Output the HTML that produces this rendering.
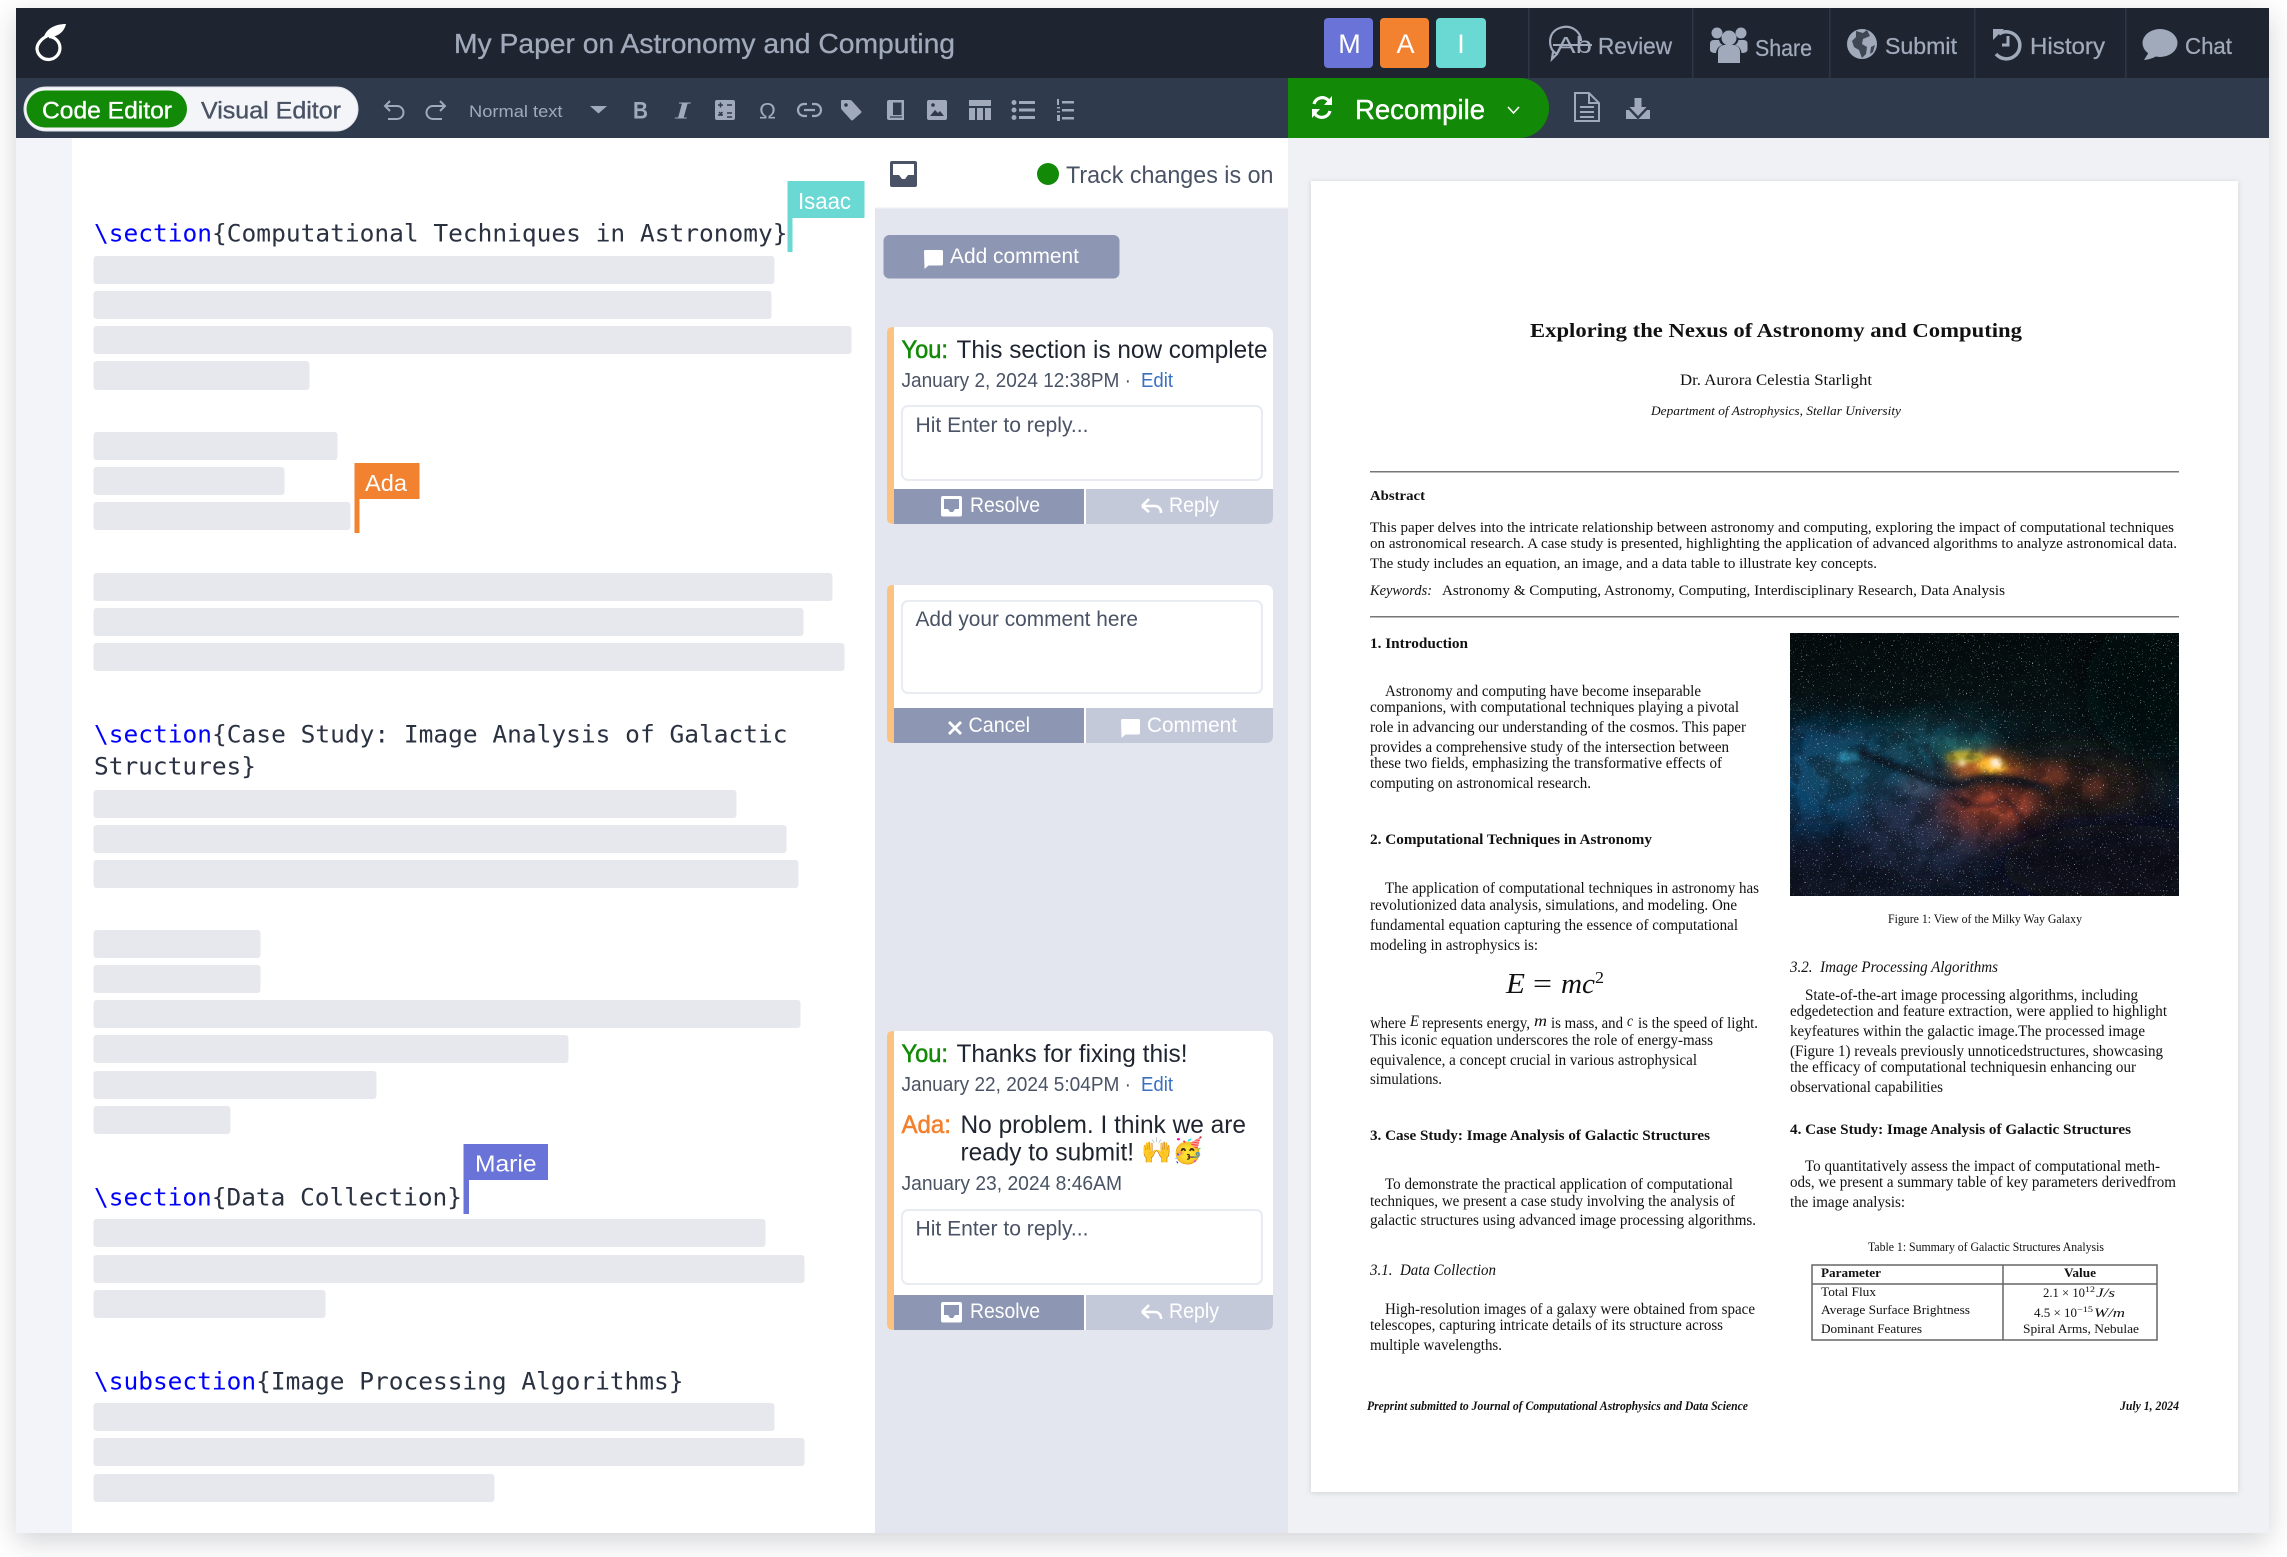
<!DOCTYPE html>
<html lang="en"><head><meta charset="utf-8"><title>My Paper on Astronomy and Computing</title>
<style>
html,body{margin:0;padding:0;background:#fff;width:2287px;height:1557px;overflow:hidden}
#app{position:absolute;left:16px;top:8px;width:2253px;height:1525px;box-shadow:0 8px 26px rgba(30,37,48,.2);background:#fff}
svg{position:absolute;left:0;top:0}
.u{font-family:"Liberation Sans",sans-serif}
.s{font-family:"Liberation Serif",serif;fill:#111}
.b{font-weight:bold}.i{font-style:italic}
.m{font-family:"DejaVu Sans Mono","Liberation Mono",monospace;font-size:24.4px;fill:#2a3140}
.m tspan{fill:#0000ff}
.bar{fill:#e7e8ed}
.h{font-size:23px;fill:#a0aabb}
.t{font-size:15.4px}.a{font-size:14.5px}.sec{font-size:14.2px;font-weight:bold}.tb{font-size:12.6px}
.cap{font-size:12.4px}
.d{font-size:20px;fill:#495365}.e{font-size:20px;fill:#3a6fc2}.c{font-size:25px;fill:#1e2530}.y{font-size:25px;fill:#138a07;stroke:#138a07;stroke-width:.55}
.p{font-size:21.5px;fill:#495365}.w{font-size:21px;fill:#fff}
</style></head><body>
<div id="app"></div>
<svg width="2287" height="1557" viewBox="0 0 2287 1557" xmlns="http://www.w3.org/2000/svg">
<defs>
<clipPath id="gc"><rect x="1790" y="633" width="389" height="263"/></clipPath>
<filter id="f0" x="-60%" y="-60%" width="220%" height="220%"><feGaussianBlur stdDeviation="26"/></filter>
<filter id="f1" x="-50%" y="-50%" width="200%" height="200%"><feGaussianBlur stdDeviation="16"/></filter>
<filter id="f2" x="-50%" y="-50%" width="200%" height="200%"><feGaussianBlur stdDeviation="7"/></filter>
<filter id="f3" x="-50%" y="-50%" width="200%" height="200%"><feGaussianBlur stdDeviation="2.5"/></filter>
<filter id="stars" x="0" y="0" width="1" height="1" color-interpolation-filters="sRGB"><feTurbulence type="fractalNoise" baseFrequency="0.62" numOctaves="2" seed="7"/><feColorMatrix values="0 0 0 0 .85  0 0 0 0 .9  0 0 0 0 1  16 0 0 0 -11.200"/></filter>
<filter id="noise" x="0" y="0" width="1" height="1" color-interpolation-filters="sRGB"><feTurbulence type="fractalNoise" baseFrequency="0.045" numOctaves="4" seed="11"/><feColorMatrix values="0 0 0 0 .02  0 0 0 0 .03  0 0 0 0 .05  6 0 0 0 -2.600"/></filter>
<linearGradient id="gbg" x1="0" y1="0" x2="0" y2="1"><stop offset="0" stop-color="#040b0b"/><stop offset=".3" stop-color="#071416"/><stop offset=".5" stop-color="#0a1c22"/><stop offset=".75" stop-color="#10172a"/><stop offset="1" stop-color="#111624"/></linearGradient>
<g id="inb"><rect x="0" y="0" width="21" height="20.5" rx="2" fill="#fff"/><path d="M3 3h15v10h-4l-2 3h-3l-2-3H3z" fill="#8d96b2"/></g>
<g id="rep"><path d="M1 9h13a6 6 0 0 1 6 6v1M1 9l7-7M1 9l7 6" fill="none" stroke="#fff" stroke-width="2.6"/></g>
<g id="bub"><path d="M0 1.500q0-1.500 1.500-1.500h16q1.500 0 1.500 1.500v12.500q0 1.500-1.500 1.500h-13l-4 3.500z" fill="#fff"/></g>
</defs>

<!-- header -->
<rect x="16" y="8" width="2253" height="70" fill="#1e2530"/>
<rect x="16" y="78" width="2253" height="60" fill="#2f3a4d"/>
<path d="M44 37C46 29 55 24 66 24C64 33 56 38 46 37Z" fill="#fff"/>
<path d="M47 36C41 39 37 44 37 49A11.500 11.500 0 1 0 49 36.500" fill="none" stroke="#fff" stroke-width="3.200"/>
<text class="u" x="454" y="53" font-size="28" fill="#a0aabb" stroke="#a0aabb" stroke-width=".3" textLength="501" lengthAdjust="spacingAndGlyphs">My Paper on Astronomy and Computing</text>

<rect x="1324" y="18" width="49" height="50" rx="4" fill="#6a74d8"/><text class="u" x="1349.500" y="53" font-size="27" fill="#fff" text-anchor="middle">M</text>
<rect x="1380" y="18" width="49" height="50" rx="4" fill="#f28130"/><text class="u" x="1405.500" y="53" font-size="27" fill="#fff" text-anchor="middle">A</text>
<rect x="1436" y="18" width="50" height="50" rx="4" fill="#6ad8d3"/><text class="u" x="1461" y="53" font-size="27" fill="#fff" text-anchor="middle">I</text>
<g fill="#2c3645"><rect x="1528" y="8" width="1.500" height="70"/><rect x="1692" y="8" width="1.500" height="70"/><rect x="1829" y="8" width="1.500" height="70"/><rect x="1974" y="8" width="1.500" height="70"/><rect x="2125" y="8" width="1.500" height="70"/></g>

<path d="M1558 54C1550 52 1549 42 1551 36C1554 28 1566 24 1574 29C1579 32 1581 37 1581 41M1558 53L1552 59L1553 52" fill="none" stroke="#a0aabb" stroke-width="2.200"/>
<text class="u" x="1556" y="53" font-size="23" fill="#a0aabb" textLength="36" lengthAdjust="spacingAndGlyphs">Ab</text>
<rect x="1553" y="44" width="39" height="2" fill="#a0aabb"/>
<text class="u h" x="1598" y="54" stroke="#a0aabb" stroke-width=".25" textLength="74" lengthAdjust="spacingAndGlyphs">Review</text>

<g fill="#a0aabb"><circle cx="1729" cy="38" r="7.500"/><circle cx="1717" cy="33" r="5.500"/><circle cx="1741" cy="33" r="5.500"/><path d="M1718 63V52q0-6 6-7h10q6 1 6 7v11z"/><path d="M1710 50v-6q0-4 4-4h5q1 4 4 5q-6 1-7 8h-2q-4-1-4-3z"/><path d="M1747.500 50v-6q0-4-4-4h-5q-1 4-4 5q6 1 7 8h2q4-1 4-3z"/></g>
<text class="u h" x="1755" y="56" stroke="#a0aabb" stroke-width=".25" textLength="57" lengthAdjust="spacingAndGlyphs">Share</text>

<circle cx="1862" cy="44" r="15" fill="#a0aabb"/>
<path d="M1856 31l7 2 4-3 3 6-7 3-1 5 5 3-1 7-4 4-3-8-5-3-2-6 4-4zM1871 47l4-2-2 7-3 2z" fill="#1e2530" opacity=".75"/>
<text class="u h" x="1885" y="54" stroke="#a0aabb" stroke-width=".25" textLength="72" lengthAdjust="spacingAndGlyphs">Submit</text>

<path d="M1999 34a13.500 13.500 0 1 1-3 20" fill="none" stroke="#a0aabb" stroke-width="3.500"/><path d="M1993 29h11l-11 11z" fill="#a0aabb"/><path d="M2008 36v9h-6" fill="none" stroke="#a0aabb" stroke-width="3"/>
<text class="u h" x="2030" y="54" stroke="#a0aabb" stroke-width=".25" textLength="75" lengthAdjust="spacingAndGlyphs">History</text>

<ellipse cx="2160" cy="43" rx="17.500" ry="14" fill="#a0aabb"/><path d="M2149 52L2144 60Q2154 59 2159 54z" fill="#a0aabb"/>
<text class="u h" x="2185" y="54" stroke="#a0aabb" stroke-width=".25" textLength="47" lengthAdjust="spacingAndGlyphs">Chat</text>

<!-- toolbar -->
<rect x="24" y="87" width="334" height="44" rx="22" fill="#f4f5f8" stroke="#dfe2ea" stroke-width="1"/>
<rect x="26.500" y="90.500" width="160.500" height="37" rx="18.500" fill="#138a07"/>
<text class="u" x="42" y="118.500" font-size="24" fill="#fff" stroke="#fff" stroke-width=".35" textLength="130" lengthAdjust="spacingAndGlyphs">Code Editor</text>
<text class="u" x="201" y="118.500" font-size="24" fill="#495365" stroke="#495365" stroke-width=".35" textLength="140" lengthAdjust="spacingAndGlyphs">Visual Editor</text>
<g fill="none" stroke="#a0aabb" stroke-width="2">
<path d="M390 101l-5 5 5 5M385 106h12a6.500 6.500 0 0 1 0 13h-9"/>
<path d="M440 101l5 5-5 5M445 106h-12a6.500 6.500 0 0 0 0 13h9"/>
</g>
<text class="u" x="469" y="117" font-size="17" fill="#a0aabb" textLength="93.500" lengthAdjust="spacingAndGlyphs">Normal text</text>
<path d="M590 106h17l-8.500 7.500z" fill="#a0aabb"/>
<text class="u b" x="633" y="118.500" font-size="24" fill="#a0aabb" textLength="15" lengthAdjust="spacingAndGlyphs">B</text>
<text x="675" y="118.500" font-family="Liberation Serif,serif" font-style="italic" font-weight="bold" font-size="24" fill="#a0aabb" textLength="15" lengthAdjust="spacingAndGlyphs">I</text>
<rect x="715" y="100" width="20" height="20" rx="2" fill="#a0aabb"/><path d="M718 105h5M720.500 102.500v5M727 105h5M718 115h5M727 113h5M727 117h5M719 112l3.500 3.500M722.500 112l-3.500 3.500" stroke="#2f3a4d" stroke-width="1.500" fill="none"/>
<text class="u" x="759" y="118.500" font-size="22" fill="#a0aabb" textLength="17" lengthAdjust="spacingAndGlyphs">Ω</text>
<g fill="none" stroke="#a0aabb" stroke-width="2.200"><path d="M807 104h-3a6 6 0 0 0 0 12h3M812 104h3a6 6 0 0 1 0 12h-3M804 110h11"/></g>
<path d="M841 101q0-1 1-1h8q1 0 2 1l9 10q1 1 0 2l-8 7q-1 1-2 0l-9-10q-1-1-1-2z" fill="#a0aabb"/><circle cx="846" cy="105" r="1.800" fill="#2f3a4d"/>
<path d="M887 102q0-2 2-2h15v20h-15q-2 0-2-2z" fill="#a0aabb"/><path d="M893 102.500h8.500v12.500h-8.500z" fill="#2f3a4d"/><path d="M890 117h12" stroke="#2f3a4d" stroke-width="1.200"/>
<rect x="927" y="100" width="20" height="20" rx="2" fill="#a0aabb"/><path d="M930 116l5-6 3 3 2-2 4 5z" fill="#2f3a4d"/><circle cx="933" cy="105" r="1.800" fill="#2f3a4d"/>
<path d="M969 100h22v6h-22zM969 108h6v12h-6zM977 108h6v12h-6zM985 108h6v12h-6z" fill="#a0aabb"/>
<g fill="#a0aabb"><circle cx="1014" cy="102.500" r="2.500"/><circle cx="1014" cy="110" r="2.500"/><circle cx="1014" cy="117.500" r="2.500"/><rect x="1019" y="101" width="16" height="3"/><rect x="1019" y="108.500" width="16" height="3"/><rect x="1019" y="116" width="16" height="3"/>
<rect x="1057" y="99" width="2" height="6"/><rect x="1057" y="107" width="3" height="1.500"/><rect x="1057" y="111" width="3" height="1.500"/><rect x="1057" y="115" width="3" height="6"/><rect x="1062" y="101" width="12" height="2.500"/><rect x="1062" y="109" width="12" height="2.500"/><rect x="1062" y="117" width="12" height="2.500"/></g>

<path d="M1288 78H1519A30 30 0 0 1 1549 108A30 30 0 0 1 1519 138H1288z" fill="#138a07"/>
<g fill="none" stroke="#fff" stroke-width="3.200"><path d="M1314 104a8.500 8.500 0 0 1 15-3"/><path d="M1330 111a8.500 8.500 0 0 1-15 3"/></g><path d="M1332 96v9h-8zM1312 118v-9h8z" fill="#fff"/>
<text class="u" x="1355" y="119" font-size="28" fill="#fff" stroke="#fff" stroke-width=".4" textLength="130" lengthAdjust="spacingAndGlyphs">Recompile</text>
<path d="M1508 107l5.500 6 5.500-6" fill="none" stroke="#fff" stroke-width="1.600"/>
<path d="M1575 93h14l10 10v18h-24zM1589 93v10h10" fill="none" stroke="#a0aabb" stroke-width="2"/><path d="M1580 107h14M1580 112h14M1580 117h14" stroke="#a0aabb" stroke-width="2"/>
<path d="M1634.500 98h7v9h5l-8.500 9-8.500-9h5z" fill="#a0aabb"/><path d="M1626 110h3l9 9.500 9-9.500h3v9h-24z" fill="#a0aabb"/>

<!-- editor -->
<rect x="16" y="138" width="859" height="1395" fill="#fff"/>
<rect x="16" y="138" width="56" height="1395" fill="#f3f4f9"/>
<g class="bar" transform="translate(-.5 0)">
<rect x="94" y="256" width="681" height="28" rx="3"/><rect x="94" y="291" width="678" height="28" rx="3"/><rect x="94" y="326" width="758" height="28" rx="3"/><rect x="94" y="361" width="216" height="29" rx="3"/>
<rect x="94" y="432" width="244" height="28" rx="3"/><rect x="94" y="467" width="191" height="28" rx="3"/><rect x="94" y="502" width="257" height="28" rx="3"/>
<rect x="94" y="573" width="739" height="28" rx="3"/><rect x="94" y="608" width="710" height="28" rx="3"/><rect x="94" y="643" width="751" height="28" rx="3"/>
<rect x="94" y="790" width="643" height="28" rx="3"/><rect x="94" y="825" width="693" height="28" rx="3"/><rect x="94" y="860" width="705" height="28" rx="3"/>
<rect x="94" y="930" width="167" height="28" rx="3"/><rect x="94" y="965" width="167" height="28" rx="3"/><rect x="94" y="1000" width="707" height="28" rx="3"/><rect x="94" y="1035" width="475" height="28" rx="3"/><rect x="94" y="1071" width="283" height="28" rx="3"/><rect x="94" y="1106" width="137" height="28" rx="3"/>
<rect x="94" y="1219" width="672" height="28" rx="3"/><rect x="94" y="1255" width="711" height="28" rx="3"/><rect x="94" y="1290" width="232" height="28" rx="3"/>
<rect x="94" y="1403" width="681" height="28" rx="3"/><rect x="94" y="1438" width="711" height="28" rx="3"/><rect x="94" y="1474" width="401" height="28" rx="3"/>
</g>
<text class="m" x="94" y="241.500" textLength="693.500" lengthAdjust="spacingAndGlyphs"><tspan>\section</tspan>{Computational Techniques in Astronomy}</text>
<text class="m" x="94" y="742.500" textLength="693.500" lengthAdjust="spacingAndGlyphs"><tspan>\section</tspan>{Case Study: Image Analysis of Galactic</text>
<text class="m" x="94" y="774.500" textLength="162" lengthAdjust="spacingAndGlyphs">Structures}</text>
<text class="m" x="94" y="1205.500" textLength="368" lengthAdjust="spacingAndGlyphs"><tspan>\section</tspan>{Data Collection}</text>
<text class="m" x="94" y="1389.500" textLength="589.500" lengthAdjust="spacingAndGlyphs"><tspan>\subsection</tspan>{Image Processing Algorithms}</text>

<path d="M787.500 181h77v37h-72v34h-5z" fill="#6ad8d3"/><text class="u" x="798" y="209" font-size="23" fill="#fff" textLength="53" lengthAdjust="spacingAndGlyphs">Isaac</text>
<path d="M354.500 463h65v36h-60v34h-5z" fill="#f28130"/><text class="u" x="365" y="491" font-size="23" fill="#fff" textLength="42" lengthAdjust="spacingAndGlyphs">Ada</text>
<path d="M463.500 1144h84.500v36h-79v34h-5.500z" fill="#6a74d8"/><text class="u" x="475" y="1171.500" font-size="23" fill="#fff" textLength="61.500" lengthAdjust="spacingAndGlyphs">Marie</text>

<!-- review panel -->
<rect x="875" y="138" width="413" height="1395" fill="#e3e6ef"/>
<rect x="875" y="138" width="413" height="70" fill="#fff"/>
<rect x="875" y="207.500" width="413" height="1.500" fill="#eceef3"/>
<path d="M892 161h23q2 0 2 2v22q0 2-2 2h-23q-2 0-2-2v-22q0-2 2-2z" fill="#495365"/><path d="M893 164h21v11h-6l-3 4h-3l-3-4h-6z" fill="#fff"/>
<circle cx="1048" cy="174" r="11" fill="#138a07"/>
<text class="u" x="1066" y="183" font-size="24.500" fill="#495365" textLength="207.500" lengthAdjust="spacingAndGlyphs">Track changes is on</text>

<rect x="883.500" y="235" width="236" height="43.500" rx="6" fill="#8d96b2"/>
<use href="#bub" x="924" y="250"/>
<text class="u w" x="950" y="263" textLength="129" lengthAdjust="spacingAndGlyphs">Add comment</text>

<!-- card 1 -->
<rect x="887" y="327" width="386" height="197" rx="7" fill="#fff"/><path d="M894 327h-1q-6 0-6 6v185q0 6 6 6h1z" fill="#fcc27f"/>
<text class="u y" x="901.500" y="358" textLength="46.500" lengthAdjust="spacingAndGlyphs">You:</text>
<text class="u c" x="956.500" y="358" textLength="311" lengthAdjust="spacingAndGlyphs">This section is now complete</text>
<text class="u d" x="901.500" y="387" textLength="229.500" lengthAdjust="spacingAndGlyphs">January 2, 2024 12:38PM ·</text>
<text class="u e" x="1141" y="387" textLength="32" lengthAdjust="spacingAndGlyphs">Edit</text>
<rect x="902" y="406" width="360" height="74" rx="6" fill="#fff" stroke="#e8ebf2" stroke-width="2"/>
<text class="u p" x="915.500" y="432" textLength="173" lengthAdjust="spacingAndGlyphs">Hit Enter to reply...</text>
<rect x="894" y="489" width="190" height="35" fill="#8d96b2"/><path d="M1086 489h187v28q0 7-7 7h-180z" fill="#c4c9da"/>
<use href="#inb" x="941" y="496"/><text class="u w" x="970" y="512" textLength="70" lengthAdjust="spacingAndGlyphs">Resolve</text>
<use href="#rep" x="1141" y="497"/><text class="u w" x="1169" y="512" textLength="50" lengthAdjust="spacingAndGlyphs">Reply</text>

<!-- card 2 -->
<rect x="887" y="585" width="386" height="158" rx="7" fill="#fff"/><path d="M894 585h-1q-6 0-6 6v146q0 6 6 6h1z" fill="#fcc27f"/>
<rect x="902" y="601" width="360" height="92" rx="6" fill="#fff" stroke="#e8ebf2" stroke-width="2"/>
<text class="u p" x="915.500" y="626" textLength="222.500" lengthAdjust="spacingAndGlyphs">Add your comment here</text>
<rect x="894" y="708" width="190" height="35" fill="#8d96b2"/><path d="M1086 708h187v28q0 7-7 7h-180z" fill="#c4c9da"/>
<path d="M949 722l12 12M961 722l-12 12" stroke="#fff" stroke-width="2.800"/><text class="u w" x="968.500" y="732" textLength="61.500" lengthAdjust="spacingAndGlyphs">Cancel</text>
<use href="#bub" x="1121" y="719"/><text class="u w" x="1147" y="732" textLength="90" lengthAdjust="spacingAndGlyphs">Comment</text>

<!-- card 3 -->
<rect x="887" y="1031" width="386" height="299" rx="7" fill="#fff"/><path d="M894 1031h-1q-6 0-6 6v287q0 6 6 6h1z" fill="#fcc27f"/>
<text class="u y" x="901.500" y="1062" textLength="46.500" lengthAdjust="spacingAndGlyphs">You:</text>
<text class="u c" x="956.500" y="1062" textLength="231" lengthAdjust="spacingAndGlyphs">Thanks for fixing this!</text>
<text class="u d" x="901.500" y="1091" textLength="229.500" lengthAdjust="spacingAndGlyphs">January 22, 2024 5:04PM ·</text>
<text class="u e" x="1141" y="1091" textLength="32" lengthAdjust="spacingAndGlyphs">Edit</text>
<text class="u" x="901.500" y="1133" font-size="25" fill="#f2812f" stroke="#f2812f" stroke-width=".55" textLength="49.500" lengthAdjust="spacingAndGlyphs">Ada:</text>
<text class="u c" x="960.500" y="1133" textLength="285.500" lengthAdjust="spacingAndGlyphs">No problem. I think we are</text>
<text class="u c" x="960.500" y="1160.500" textLength="173.500" lengthAdjust="spacingAndGlyphs">ready to submit!</text>
<text x="1141" y="1159" font-size="25" font-family="'Noto Color Emoji','Liberation Sans',sans-serif">🙌</text>
<text x="1172" y="1159" font-size="25" font-family="'Noto Color Emoji','Liberation Sans',sans-serif">🥳</text>
<text class="u d" x="901.500" y="1190" textLength="220.500" lengthAdjust="spacingAndGlyphs">January 23, 2024 8:46AM</text>
<rect x="902" y="1210" width="360" height="74" rx="6" fill="#fff" stroke="#e8ebf2" stroke-width="2"/>
<text class="u p" x="915.500" y="1235.500" textLength="173" lengthAdjust="spacingAndGlyphs">Hit Enter to reply...</text>
<rect x="894" y="1295" width="190" height="35" fill="#8d96b2"/><path d="M1086 1295h187v28q0 7-7 7h-180z" fill="#c4c9da"/>
<use href="#inb" x="941" y="1302"/><text class="u w" x="970" y="1318" textLength="70" lengthAdjust="spacingAndGlyphs">Resolve</text>
<use href="#rep" x="1141" y="1303"/><text class="u w" x="1169" y="1318" textLength="50" lengthAdjust="spacingAndGlyphs">Reply</text>

<!-- pdf pane -->
<rect x="1288" y="138" width="981" height="1395" fill="#eff1f4"/>
<rect x="1311" y="181" width="927" height="1311" fill="#fff" style="filter:drop-shadow(0 1px 3px rgba(30,37,48,.15))"/>

<text class="s b" x="1530" y="337" font-size="20.500" textLength="492" lengthAdjust="spacingAndGlyphs">Exploring the Nexus of Astronomy and Computing</text>
<text class="s" x="1680" y="385" font-size="15.500" textLength="192" lengthAdjust="spacingAndGlyphs">Dr. Aurora Celestia Starlight</text>
<text class="s i" x="1651" y="415" font-size="12.800" textLength="250" lengthAdjust="spacingAndGlyphs">Department of Astrophysics, Stellar University</text>
<rect x="1370" y="471" width="809" height="1.500" fill="#777"/>
<text class="s b" x="1370" y="500" font-size="13.500" textLength="55" lengthAdjust="spacingAndGlyphs">Abstract</text>
<text class="s a" x="1370" y="532" textLength="804" lengthAdjust="spacingAndGlyphs">This paper delves into the intricate relationship between astronomy and computing, exploring the impact of computational techniques</text>
<text class="s a" x="1370" y="548" textLength="807" lengthAdjust="spacingAndGlyphs">on astronomical research. A case study is presented, highlighting the application of advanced algorithms to analyze astronomical data.</text>
<text class="s a" x="1370" y="568" textLength="507" lengthAdjust="spacingAndGlyphs">The study includes an equation, an image, and a data table to illustrate key concepts.</text>
<text class="s a i" x="1370" y="595" textLength="62" lengthAdjust="spacingAndGlyphs">Keywords:</text>
<text class="s a" x="1442" y="595" textLength="563" lengthAdjust="spacingAndGlyphs">Astronomy &amp; Computing, Astronomy, Computing, Interdisciplinary Research, Data Analysis</text>
<rect x="1370" y="616" width="809" height="1.500" fill="#777"/>

<text class="s sec" x="1370" y="648" textLength="98" lengthAdjust="spacingAndGlyphs">1. Introduction</text>
<text class="s t" x="1385" y="696" textLength="316" lengthAdjust="spacingAndGlyphs">Astronomy and computing have become inseparable</text>
<text class="s t" x="1370" y="712" textLength="369" lengthAdjust="spacingAndGlyphs">companions, with computational techniques playing a pivotal</text>
<text class="s t" x="1370" y="732" textLength="376" lengthAdjust="spacingAndGlyphs">role in advancing our understanding of the cosmos. This paper</text>
<text class="s t" x="1370" y="752" textLength="359" lengthAdjust="spacingAndGlyphs">provides a comprehensive study of the intersection between</text>
<text class="s t" x="1370" y="768" textLength="352" lengthAdjust="spacingAndGlyphs">these two fields, emphasizing the transformative effects of</text>
<text class="s t" x="1370" y="788" textLength="221" lengthAdjust="spacingAndGlyphs">computing on astronomical research.</text>
<text class="s sec" x="1370" y="844" textLength="282" lengthAdjust="spacingAndGlyphs">2. Computational Techniques in Astronomy</text>
<text class="s t" x="1385" y="893" textLength="374" lengthAdjust="spacingAndGlyphs">The application of computational techniques in astronomy has</text>
<text class="s t" x="1370" y="910" textLength="367" lengthAdjust="spacingAndGlyphs">revolutionized data analysis, simulations, and modeling. One</text>
<text class="s t" x="1370" y="930" textLength="368" lengthAdjust="spacingAndGlyphs">fundamental equation capturing the essence of computational</text>
<text class="s t" x="1370" y="950" textLength="168" lengthAdjust="spacingAndGlyphs">modeling in astrophysics is:</text>
<text class="s i" x="1506" y="993" font-size="28" textLength="19" lengthAdjust="spacingAndGlyphs">E</text>
<text class="s" x="1533" y="993" font-size="28" textLength="19" lengthAdjust="spacingAndGlyphs">=</text>
<text class="s i" x="1561" y="993" font-size="28" textLength="34" lengthAdjust="spacingAndGlyphs">mc</text>
<text class="s" x="1595" y="983" font-size="17" textLength="9" lengthAdjust="spacingAndGlyphs">2</text>
<text class="s t" x="1370" y="1028" textLength="36" lengthAdjust="spacingAndGlyphs">where</text>
<text class="s t i" x="1410" y="1026" textLength="9" lengthAdjust="spacingAndGlyphs">E</text>
<text class="s t" x="1422" y="1028" textLength="108" lengthAdjust="spacingAndGlyphs">represents energy,</text>
<text class="s t i" x="1534" y="1026" textLength="13" lengthAdjust="spacingAndGlyphs">m</text>
<text class="s t" x="1551" y="1028" textLength="72" lengthAdjust="spacingAndGlyphs">is mass, and</text>
<text class="s t i" x="1627" y="1026" textLength="6" lengthAdjust="spacingAndGlyphs">c</text>
<text class="s t" x="1638" y="1028" textLength="120" lengthAdjust="spacingAndGlyphs">is the speed of light.</text>
<text class="s t" x="1370" y="1045" textLength="343" lengthAdjust="spacingAndGlyphs">This iconic equation underscores the role of energy-mass</text>
<text class="s t" x="1370" y="1065" textLength="327" lengthAdjust="spacingAndGlyphs">equivalence, a concept crucial in various astrophysical</text>
<text class="s t" x="1370" y="1084" textLength="72" lengthAdjust="spacingAndGlyphs">simulations.</text>
<text class="s sec" x="1370" y="1140" textLength="340" lengthAdjust="spacingAndGlyphs">3. Case Study: Image Analysis of Galactic Structures</text>
<text class="s t" x="1385" y="1189" textLength="348" lengthAdjust="spacingAndGlyphs">To demonstrate the practical application of computational</text>
<text class="s t" x="1370" y="1206" textLength="365" lengthAdjust="spacingAndGlyphs">techniques, we present a case study involving the analysis of</text>
<text class="s t" x="1370" y="1225" textLength="386" lengthAdjust="spacingAndGlyphs">galactic structures using advanced image processing algorithms.</text>
<text class="s t i" x="1370" y="1275" xml:space="preserve" textLength="126" lengthAdjust="spacingAndGlyphs">3.1.  Data Collection</text>
<text class="s t" x="1385" y="1314" textLength="370" lengthAdjust="spacingAndGlyphs">High-resolution images of a galaxy were obtained from space</text>
<text class="s t" x="1370" y="1330" textLength="353" lengthAdjust="spacingAndGlyphs">telescopes, capturing intricate details of its structure across</text>
<text class="s t" x="1370" y="1350" textLength="132" lengthAdjust="spacingAndGlyphs">multiple wavelengths.</text>
<text class="s b i" x="1367" y="1410" font-size="12.500" textLength="381" lengthAdjust="spacingAndGlyphs">Preprint submitted to Journal of Computational Astrophysics and Data Science</text>
<text class="s b i" x="2120" y="1410" font-size="12.500" textLength="59" lengthAdjust="spacingAndGlyphs">July 1, 2024</text>

<!-- galaxy -->
<g clip-path="url(#gc)">
<rect x="1790" y="633" width="389" height="263" fill="url(#gbg)"/>
<ellipse cx="1815" cy="775" rx="85" ry="50" fill="#0d4470" filter="url(#f1)"/>
<ellipse cx="1885" cy="770" rx="90" ry="34" fill="#134862" filter="url(#f1)"/>
<ellipse cx="1930" cy="825" rx="70" ry="42" fill="#232f48" filter="url(#f1)"/>
<ellipse cx="1945" cy="745" rx="55" ry="22" fill="#164a58" filter="url(#f1)"/>
<ellipse cx="1960" cy="750" rx="28" ry="9" fill="#2a8a86" filter="url(#f2)"/>
<ellipse cx="2070" cy="785" rx="85" ry="30" fill="#2c1a18" filter="url(#f1)"/>
<ellipse cx="1990" cy="808" rx="52" ry="26" fill="#7a3326" filter="url(#f1)"/>
<ellipse cx="2000" cy="805" rx="32" ry="14" fill="#a5452e" filter="url(#f2)"/>
<ellipse cx="2048" cy="775" rx="26" ry="9" fill="#7c3826" filter="url(#f2)"/>
<ellipse cx="2095" cy="787" rx="14" ry="7" fill="#6e3226" filter="url(#f2)"/>
<ellipse cx="1985" cy="766" rx="38" ry="14" fill="#b45a22" filter="url(#f2)"/>
<ellipse cx="1965" cy="757" rx="20" ry="6" fill="#b8a830" filter="url(#f3)"/>
<ellipse cx="1992" cy="766" rx="15" ry="9" fill="#ffb92e" filter="url(#f3)"/>
<ellipse cx="1996" cy="763" rx="6" ry="5" fill="#fff0d8" filter="url(#f3)"/>
<ellipse cx="1962" cy="763" rx="4" ry="3" fill="#fff0c0" filter="url(#f3)"/>
<ellipse cx="1850" cy="757" rx="11" ry="5" fill="#2f9cc4" filter="url(#f3)"/>
<ellipse cx="1918" cy="785" rx="16" ry="10" fill="#45566e" filter="url(#f2)"/>
<path d="M1860 752Q1900 768 1925 778Q1950 790 1975 780Q2010 776 2050 790" fill="none" stroke="#0a1220" stroke-width="8" filter="url(#f3)" opacity=".85"/>
<path d="M1950 795Q1985 815 2005 798Q2020 815 2035 835M1940 770L1925 745" fill="none" stroke="#14101a" stroke-width="4" filter="url(#f3)" opacity=".7"/>
<ellipse cx="2155" cy="690" rx="70" ry="70" fill="#030808" filter="url(#f1)" opacity=".8"/>
<ellipse cx="2120" cy="865" rx="120" ry="40" fill="#0e1016" filter="url(#f1)" opacity=".8"/>
<rect x="1790" y="633" width="389" height="263" filter="url(#noise)" opacity=".3"/>
<rect x="1790" y="633" width="389" height="263" filter="url(#stars)" opacity=".6"/>
</g>
<text class="s cap" x="1888" y="923" textLength="194" lengthAdjust="spacingAndGlyphs">Figure 1: View of the Milky Way Galaxy</text>

<text class="s t i" x="1790" y="972" xml:space="preserve" textLength="208" lengthAdjust="spacingAndGlyphs">3.2.  Image Processing Algorithms</text>
<text class="s t" x="1805" y="1000" textLength="333" lengthAdjust="spacingAndGlyphs">State-of-the-art image processing algorithms, including</text>
<text class="s t" x="1790" y="1016" textLength="377" lengthAdjust="spacingAndGlyphs">edgedetection and feature extraction, were applied to highlight</text>
<text class="s t" x="1790" y="1036" textLength="355" lengthAdjust="spacingAndGlyphs">keyfeatures within the galactic image.The processed image</text>
<text class="s t" x="1790" y="1056" textLength="373" lengthAdjust="spacingAndGlyphs">(Figure 1) reveals previously unnoticedstructures, showcasing</text>
<text class="s t" x="1790" y="1072" textLength="346" lengthAdjust="spacingAndGlyphs">the efficacy of computational techniquesin enhancing our</text>
<text class="s t" x="1790" y="1092" textLength="153" lengthAdjust="spacingAndGlyphs">observational capabilities</text>
<text class="s sec" x="1790" y="1134" textLength="341" lengthAdjust="spacingAndGlyphs">4. Case Study: Image Analysis of Galactic Structures</text>
<text class="s t" x="1805" y="1171" textLength="355" lengthAdjust="spacingAndGlyphs">To quantitatively assess the impact of computational meth-</text>
<text class="s t" x="1790" y="1187" textLength="386" lengthAdjust="spacingAndGlyphs">ods, we present a summary table of key parameters derivedfrom</text>
<text class="s t" x="1790" y="1207" textLength="115" lengthAdjust="spacingAndGlyphs">the image analysis:</text>
<text class="s cap" x="1868" y="1251" textLength="236" lengthAdjust="spacingAndGlyphs">Table 1: Summary of Galactic Structures Analysis</text>
<g fill="none" stroke="#666" stroke-width="1.500"><rect x="1812" y="1265" width="345" height="75"/><path d="M1812 1284H2157M2003 1265V1340"/></g>
<text class="s tb b" x="1821" y="1277" textLength="60" lengthAdjust="spacingAndGlyphs">Parameter</text>
<text class="s tb b" x="2064" y="1277" textLength="32" lengthAdjust="spacingAndGlyphs">Value</text>
<text class="s tb" x="1821" y="1296" textLength="55" lengthAdjust="spacingAndGlyphs">Total Flux</text>
<text class="s tb" x="2043" y="1297" textLength="42" lengthAdjust="spacingAndGlyphs">2.1 × 10</text>
<text class="s" x="2085" y="1292" font-size="8.500" textLength="10" lengthAdjust="spacingAndGlyphs">12</text>
<text class="s tb i" x="2096" y="1297" textLength="19" lengthAdjust="spacingAndGlyphs">J/s</text>
<text class="s tb" x="1821" y="1314" textLength="149" lengthAdjust="spacingAndGlyphs">Average Surface Brightness</text>
<text class="s tb" x="2034" y="1317" textLength="43" lengthAdjust="spacingAndGlyphs">4.5 × 10</text>
<text class="s" x="2077" y="1312" font-size="8.500" textLength="16" lengthAdjust="spacingAndGlyphs">−15</text>
<text class="s tb i" x="2094" y="1317" textLength="31" lengthAdjust="spacingAndGlyphs">W/m</text>
<text class="s tb" x="1821" y="1333" textLength="101" lengthAdjust="spacingAndGlyphs">Dominant Features</text>
<text class="s tb" x="2023" y="1333" textLength="116" lengthAdjust="spacingAndGlyphs">Spiral Arms, Nebulae</text>
</svg>
</body></html>
